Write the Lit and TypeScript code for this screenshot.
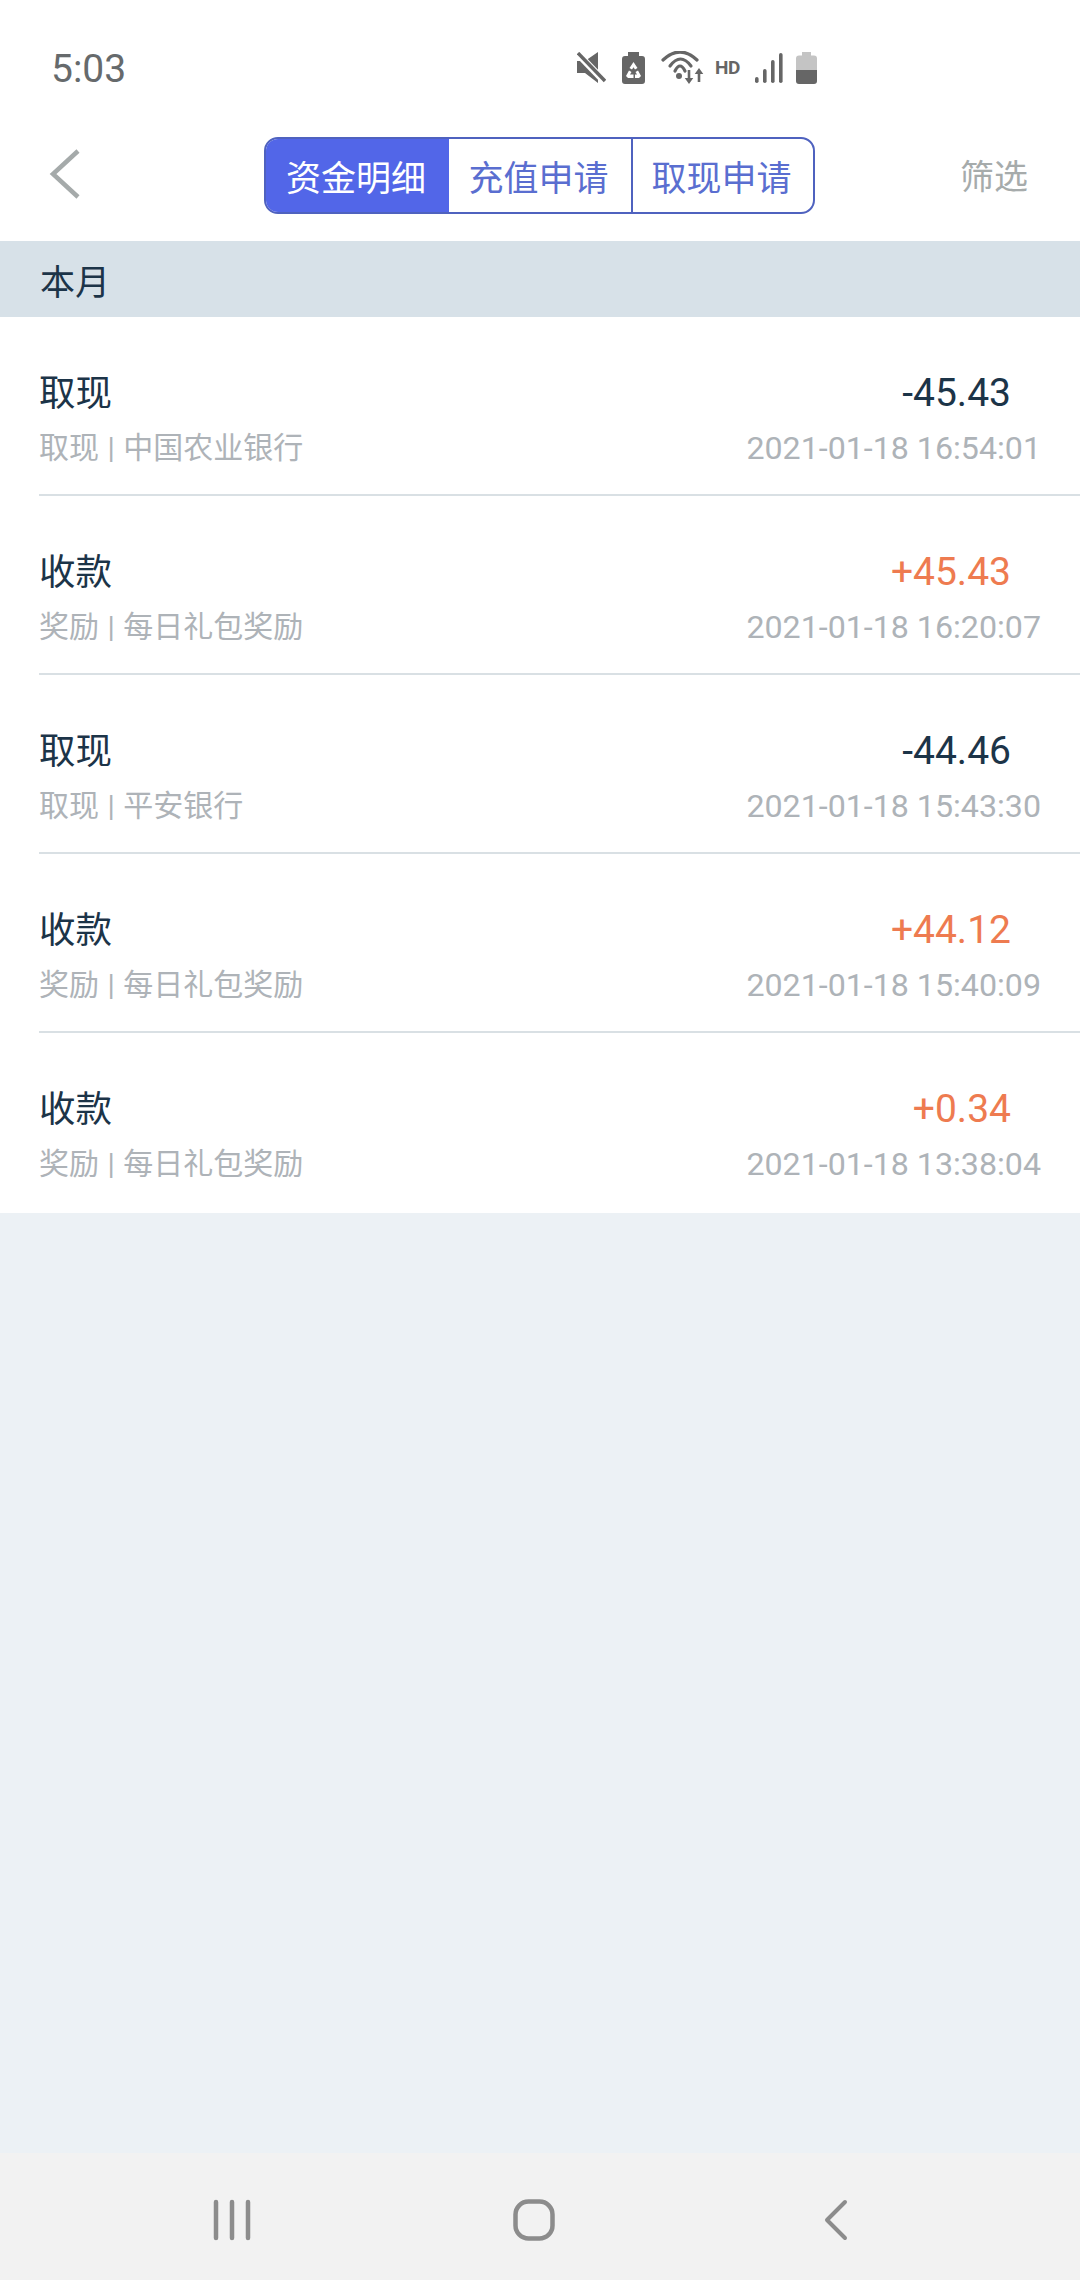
import { LitElement, html, css } from 'lit';
import { customElement } from 'lit/decorators.js';

interface Entry {
  title: string;
  sub: string;
  amount: string;
  time: string;
}

const ENTRIES: Entry[] = [
  { title: '取现', sub: '取现 | 中国农业银行', amount: '-45.43', time: '2021-01-18 16:54:01' },
  { title: '收款', sub: '奖励 | 每日礼包奖励', amount: '+45.43', time: '2021-01-18 16:20:07' },
  { title: '取现', sub: '取现 | 平安银行', amount: '-44.46', time: '2021-01-18 15:43:30' },
  { title: '收款', sub: '奖励 | 每日礼包奖励', amount: '+44.12', time: '2021-01-18 15:40:09' },
  { title: '收款', sub: '奖励 | 每日礼包奖励', amount: '+0.34', time: '2021-01-18 13:38:04' },
];

const TABS = ['资金明细', '充值申请', '取现申请'];

@customElement('app-root')
export class AppRoot extends LitElement {
  static styles = css`
    :host {
      display: block;
      width: 1080px;
      height: 2280px;
      font-family: Roboto, 'Noto Sans CJK SC', sans-serif;
    }

    .page {
      display: flex;
      flex-direction: column;
      height: 100%;
      background: #ecf1f5;
    }

    .status {
      display: flex;
      align-items: center;
      height: 120px;
      padding: 15px 263px 0 51px;
      box-sizing: border-box;
      background: #fff;
      flex: none;
    }

    .time {
      font-size: 39px;
      color: #666a6c;
      margin-right: auto;
      padding-top: 3px;
    }

    .status svg {
      display: block;
      flex: none;
      fill: #666;
    }

    .mute {
      margin-right: 16px;
    }

    .saver {
      margin-right: 16px;
    }

    .hd {
      width: 26px;
      margin: 0 14px 0 10.500px;
      font-size: 19px;
      font-weight: 700;
      letter-spacing: -0.5px;
      color: #666;
    }

    .signal {
      margin-right: 13px;
    }

    .header {
      display: grid;
      grid-template-columns: 264px 551px 1fr;
      align-items: start;
      height: 121px;
      background: #fff;
      flex: none;
    }

    .back {
      display: block;
      margin: 27px 0 0 48px;
    }

    .tabs {
      display: grid;
      grid-template-columns: 183px 182px 1fr;
      height: 77px;
      margin-top: 17px;
      box-sizing: border-box;
      border: 2px solid #4f62bf;
      border-radius: 14px;
      overflow: hidden;
    }

    .tab {
      display: flex;
      align-items: center;
      justify-content: center;
      padding-right: 3px;
      font-size: 35px;
      color: #5a6ed0;
    }

    .tab:last-child {
      border-left: 2px solid #4f62bf;
    }

    .tab.active {
      background: #5266e8;
      color: #fff;
    }

    .filter {
      justify-self: end;
      margin: 30px 52px 0 0;
      font-size: 34px;
      color: #a6abab;
    }

    .band {
      display: flex;
      align-items: center;
      height: 76px;
      padding-left: 40px;
      background: #d7e1e8;
      font-size: 35px;
      color: #1c3448;
      flex: none;
    }

    .list {
      background: #fff;
      padding-left: 39px;
      flex: none;
    }

    .row {
      display: grid;
      grid-template-columns: 1fr auto;
      grid-template-rows: 50px 50px;
      row-gap: 4px;
      height: 179px;
      box-sizing: border-box;
      padding: 52px 39px 0 0;
      border-bottom: 2px solid #d9e0e4;
    }

    .row:last-child {
      height: 180px;
      border-bottom: none;
    }

    .title {
      font-size: 36.500px;
      line-height: 50px;
      color: #1c3448;
    }

    .amount {
      justify-self: end;
      padding-right: 30px;
      font-size: 39px;
      line-height: 48px;
      color: #1c3448;
    }

    .amount.plus {
      color: #ee7b50;
    }

    .sub {
      font-size: 30px;
      line-height: 50px;
      word-spacing: 1px;
      color: #aeb3b8;
    }

    .when {
      justify-self: end;
      font-size: 32.200px;
      line-height: 50px;
      color: #aeb3b8;
    }

    .spacer {
      flex: 1;
    }

    .nav {
      display: grid;
      grid-template-columns: repeat(3, 302px);
      justify-content: center;
      align-items: center;
      justify-items: center;
      height: 127px;
      padding: 0 12px 0 0;
      box-sizing: border-box;
      background: #f2f2f2;
      flex: none;
    }

    .nav svg {
      display: block;
      margin-top: 6px;
      stroke: #8c8c8c;
      fill: none;
      stroke-linecap: round;
      stroke-linejoin: round;
    }
  `;

  private statusIcons() {
    return html`
      <svg class="mute" width="29" height="31" viewBox="0 0 29 31">
        <path d="M0 9h8L21 0v31L8 21H0z" />
        <path d="M0 1l28 29" stroke="#fff" stroke-width="7" />
        <path d="M1 1l27 28" stroke="#666" stroke-width="3.4" />
      </svg>
      <svg class="saver" width="23" height="32" viewBox="0 0 23 32">
        <path d="M6 0h11v4h3a3 3 0 0 1 3 3v22a3 3 0 0 1-3 3H3a3 3 0 0 1-3-3V7a3 3 0 0 1 3-3h3z" />
        <path d="M11.500 10l4 6-2.500 1.500-1.500-2.300-1.500 2.300L7.500 16zM4 24l3-5.500 2.500 1.400-1.500 2.700h3.500V26H6zM19 24l-3-5.500-2.500 1.400 1.500 2.700h-2v3.400H17z" fill="#fff" />
      </svg>
      <svg width="44" height="34" viewBox="0 0 44 34">
        <g fill="none" stroke="#666" stroke-width="3.200" stroke-linecap="round">
          <path d="M2 9Q19-7 36 9" />
          <path d="M9 15Q19.500 1 30 15" />
          <path d="M14 20Q19 10 24 20" />
        </g>
        <circle cx="18" cy="25" r="3" />
        <path d="M26.700 19h2.600v8h3l-4.300 6-4.300-6h3zM36.700 31v-8h-3l4.300-6 4.300 6h-3v8z" />
      </svg>
      <span class="hd">HD</span>
      <svg class="signal" width="28" height="30" viewBox="0 0 28 30">
        <rect x="0" y="24" width="3.600" height="6" rx="1.800" />
        <rect x="8" y="16" width="3.600" height="14" rx="1.800" />
        <rect x="16" y="7" width="3.600" height="23" rx="1.800" />
        <rect x="24" y="0" width="3.600" height="30" rx="1.800" />
      </svg>
      <svg width="21" height="32" viewBox="0 0 21 32">
        <path d="M6 0h9v3.500h3a3 3 0 0 1 3 3V18H0V6.500a3 3 0 0 1 3-3h3z" fill="#c4c4c4" />
        <path d="M0 18h21v11a3 3 0 0 1-3 3H3a3 3 0 0 1-3-3z" fill="#666" />
      </svg>
    `;
  }

  render() {
    return html`
      <div class="page">
        <div class="status">
          <span class="time">5:03</span>
          ${this.statusIcons()}
        </div>
        <div class="header">
          <svg class="back" width="34" height="54" viewBox="0 0 34 54">
            <path d="M30 4L5 27l25 23" fill="none" stroke="#a5aaaa" stroke-width="4.500" />
          </svg>
          <div class="tabs">
            ${TABS.map((t, i) => html`<div class="tab ${i === 0 ? 'active' : ''}">${t}</div>`)}
          </div>
          <div class="filter">筛选</div>
        </div>
        <div class="band">本月</div>
        <div class="list">
          ${ENTRIES.map(
            (e) => html`
              <div class="row">
                <div class="title">${e.title}</div>
                <div class="amount ${e.amount.startsWith('+') ? 'plus' : ''}">${e.amount}</div>
                <div class="sub">${e.sub}</div>
                <div class="when">${e.time}</div>
              </div>
            `
          )}
        </div>
        <div class="spacer"></div>
        <div class="nav">
          <svg width="38" height="42" viewBox="0 0 38 42" stroke-width="4.500">
            <path d="M3 3v36M19 3v36M35 3v36" />
          </svg>
          <svg width="42" height="42" viewBox="0 0 42 42" stroke-width="4.500">
            <rect x="2.500" y="2.500" width="37" height="37" rx="13" />
          </svg>
          <svg width="26" height="42" viewBox="0 0 26 42" stroke-width="4">
            <path d="M22 3L4 21l18 18" />
          </svg>
        </div>
      </div>
    `;
  }
}
